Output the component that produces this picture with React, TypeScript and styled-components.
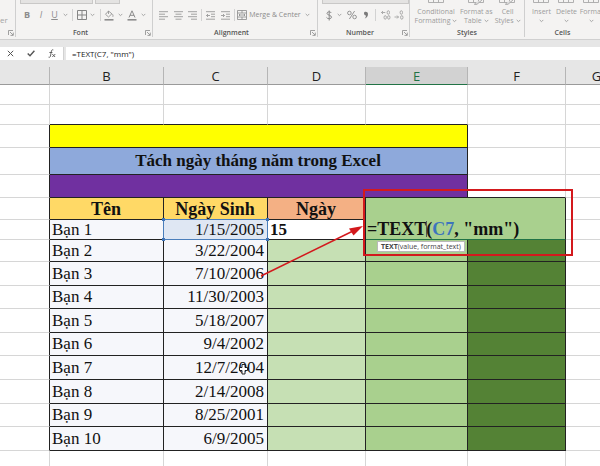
import React from "react";
import styled, { createGlobalStyle, css } from "styled-components";

const GlobalStyle = createGlobalStyle`
  *, *::before, *::after { box-sizing: border-box; }
  body { margin: 0; background: #fff; font-family: "Open Sans", "Noto Sans", sans-serif; }
`;

const ink = "#222";
const grid = "#d6d6d6";

const Page = styled.div`
  height: 100vh;
  overflow: hidden;
  display: flex;
  flex-direction: column;
`;

/* ---------- Ribbon ---------- */

const Ribbon = styled.header`
  flex: none;
  display: flex;
  height: 40px;
  overflow: hidden;
  background: #f4f3f2;
  border-bottom: 1px solid #d0d0d0;
`;

const Group = styled.section<{ $w?: number }>`
  flex: ${(p) => (p.$w ? `0 0 ${p.$w}px` : "1 0 0")};
  display: flex;
  flex-direction: column;
  min-width: 0;
  margin-bottom: 2px;
  border-right: 1px solid #cfcfcf;
  overflow: hidden;
  &:last-child { border-right: 0; }
`;

const Top = styled.div`
  flex: none;
  height: 7px;
  display: flex;
  align-items: flex-start;
  gap: 2px;
  padding-left: 4px;
`;

const Stub = styled.div<{ $w?: number }>`
  ${(p) => (p.$w ? `width: ${p.$w}px;` : "flex: 1;")}
  height: 4px;
  background: #e4e3e2;
  border: 1px solid #c9c8c7;
  border-top: 0;
`;

const Tools = styled.div<{ $pad: number }>`
  flex: none;
  display: flex;
  align-items: center;
  height: 16px;
  padding-left: ${(p) => p.$pad}px;
`;

const Tool = styled.button<{ $w: number; $label?: boolean }>`
  flex: 0 0 ${(p) => p.$w}px;
  display: flex;
  align-items: center;
  justify-content: center;
  height: 14px;
  padding: 0;
  border: 0;
  background: none;
  color: #8c8c8c;
  font: ${(p) => (p.$label ? 7 : 9)}px/14px "Open Sans", sans-serif;
  white-space: nowrap;
`;

const Rule = styled.span<{ $w: number }>`
  flex: 0 0 ${(p) => p.$w}px;
  height: 12px;
  background: linear-gradient(#d2d2d2, #d2d2d2) center / 1px 100% no-repeat;
`;

const BigTools = styled.div<{ $pad: number }>`
  flex: none;
  display: flex;
  padding-left: ${(p) => p.$pad}px;
  height: 27px;
`;

const BigTool = styled.button<{ $w: number }>`
  flex: 0 0 ${(p) => p.$w}px;
  display: flex;
  flex-direction: column;
  align-items: center;
  padding: 0;
  border: 0;
  background: none;
  color: #9c9c9c;
  font: 7px/9px "Open Sans", sans-serif;
  white-space: nowrap;
  svg { display: block; }
`;

const Line = styled.span`
  display: flex;
  align-items: center;
  gap: 2px;
  height: 9px;
`;

const Caption = styled.footer`
  margin-top: auto;
  flex: none;
  display: flex;
  align-items: center;
  height: 9px;
  font-size: 7px;
  line-height: 9px;
  font-weight: 600;
  color: #555;
`;

const CaptionText = styled.span`
  flex: 1;
  text-align: center;
`;

const Launcher = styled.button`
  flex: none;
  display: flex;
  padding: 0 1px 0 0;
  border: 0;
  background: none;
  color: #8a8a8a;
`;

const Clipped = styled.div`
  height: 14px;
  margin-top: 7px;
  color: #a3a3a3;
  font-size: 8px;
  line-height: 12px;
`;

const Chevron = () => (
  <svg width="5" height="4" viewBox="0 0 5 4" fill="none" stroke="#a5a5a5">
    <path d="M.7.9 2.5 2.7 4.3.9" />
  </svg>
);

const Launch = () => (
  <Launcher aria-label="More options">
    <svg width="6" height="6" viewBox="0 0 6 6" fill="none" stroke="currentColor" strokeWidth=".8">
      <path d="M.5 5V.5H5M2 2l3 3M5.3 2.6v2.8H2.5" />
    </svg>
  </Launcher>
);

const AlignIcon = ({ kind }: { kind: "left" | "center" | "right" }) => {
  const x = { left: 0, center: 1.5, right: 3 }[kind];
  return (
    <svg width="9" height="9" viewBox="0 0 9 9" stroke="#999" strokeWidth=".9">
      <path d={`M0 .7h9M${x} 3.2h6M0 5.7h9M${x} 8.2h6`} />
    </svg>
  );
};

const IndentIcon = ({ out }: { out?: boolean }) => (
  <svg width="9" height="9" viewBox="0 0 9 9" stroke="#999" strokeWidth=".9" fill="none">
    <path d="M0 .7h9M5 3.2h4M5 5.7h4M0 8.2h9" />
    <path d={out ? "M4 4.5H.5M2 3 .5 4.5 2 6" : "M0 4.5h3.5M2 3l1.5 1.5L2 6"} />
  </svg>
);

const BordersIcon = () => (
  <svg width="10" height="10" viewBox="0 0 10 10" stroke="#858585" fill="none">
    <path d="M.5.5h9v9h-9zM5 .5v9M.5 5h9" />
  </svg>
);

const FillIcon = () => (
  <svg width="11" height="11" viewBox="0 0 11 11" fill="none" stroke="#8a8a8a" strokeWidth=".8">
    <path d="M4.5 1 1.5 4.3l3 2.7 3.4-3.2zM4.5 1v3M8 3.8c1 .8 1.3 2 .8 3" />
    <path d="M.5 9h9v1.6h-9z" fill="#8d8d8d" stroke="none" />
  </svg>
);

const FontColorIcon = () => (
  <svg width="10" height="11" viewBox="0 0 10 11" fill="none" stroke="#8a8a8a">
    <path d="M2 7.5 5 .8l3 6.7M3 5.3h4" />
    <path d="M.5 9h9v1.6h-9z" fill="#8d8d8d" stroke="none" />
  </svg>
);

const MergeIcon = () => (
  <svg width="10" height="10" viewBox="0 0 10 10" fill="none" stroke="#8a8a8a" strokeWidth=".8">
    <path d="M.5.5h9v9h-9zM.5 3h9M.5 7h9M5 .5V3M5 7v2.5M2 5h6M3 4 2 5l1 1M7 4l1 1-1 1" />
  </svg>
);

const DecimalIcon = ({ less }: { less?: boolean }) => (
  <svg width="10" height="10" viewBox="0 0 10 10" fill="none" stroke="#999" strokeWidth=".8">
    <path d={less ? "M.5 7h4M3 5.5 4.5 7 3 8.5" : "M.5 2.5h3.8M2 1 .5 2.5 2 4"} />
    <ellipse cx="7.3" cy="2.5" rx="1.2" ry="1.8" />
    <ellipse cx="7.8" cy="7.4" rx="1.2" ry="1.8" />
    {!less && <ellipse cx="4.2" cy="7.4" rx="1.2" ry="1.8" />}
  </svg>
);

const SheetStub = ({ brush }: { brush?: boolean }) => (
  <svg width="17" height="7" viewBox="0 0 17 7" fill="none" stroke="#a8a8a8" strokeWidth=".9">
    <path d="M.5 0v2.5h15V0M5.5 0v2.5M10.5 0v2.5" />
    {brush && <path d="M14 0 9 4.3 6.5 4.5 8 2" fill="#ddd" />}
  </svg>
);

const styleTools = [
  { w: 48, a: "Conditional", b: "Formatting", brush: false },
  { w: 32, a: "Format as", b: "Table", brush: true },
  { w: 30, a: "Cell", b: "Styles", brush: true },
];
const cellTools = ["Insert", "Delete", "Format"];

/* ---------- Formula bar ---------- */

const FormulaBar = styled.div`
  flex: none;
  display: flex;
  gap: 2px;
  padding: 7px 0;
  background: #e6e6e6;
`;

const BarButtons = styled.div`
  flex: 0 0 64px;
  display: flex;
  align-items: center;
  height: 13px;
  background: #fff;
  border-right: 1px solid #d2d2d2;
`;

const BarButton = styled.button<{ $w: number }>`
  flex: 0 0 ${(p) => p.$w}px;
  display: flex;
  justify-content: center;
  padding: 0;
  border: 0;
  background: none;
`;

const FormulaInput = styled.input`
  flex: 1;
  min-width: 0;
  height: 13px;
  padding: 0 6px;
  border: 0;
  outline: 0;
  background: #fff;
  color: #222;
  font: 8px/13px "Open Sans", sans-serif;
`;

/* ---------- Sheet ---------- */

const Sheet = styled.table`
  flex: none;
  width: 100%;
  min-width: 628px;
  table-layout: fixed;
  border-collapse: separate;
  border-spacing: 0;
  font: 17px/18px "Liberation Serif", serif;
  color: #111;
`;

const Col = styled.col<{ $w?: number }>`
  ${(p) => p.$w && `width: ${p.$w}px;`}
`;

const Row = styled.tr<{ $h: number }>`
  height: ${(p) => p.$h}px;
`;

const ColumnHead = styled.th<{ $active?: boolean }>`
  padding: 0;
  border-right: 1px solid #b5b5b5;
  border-bottom: 1px solid #9a9a9a;
  background: #e6e6e6;
  color: #222;
  font: 13px/16px "Open Sans", sans-serif;
  overflow: hidden;
  ${(p) => p.$active && css`
    background: #d2d2d2;
    color: #217346;
    border-bottom-color: #217346;
  `}
`;

const Cell = styled.td<{ $bg?: string; $dark?: boolean; $side?: boolean; $under?: boolean; $align?: string; $bold?: boolean }>`
  position: relative;
  padding: 0 3px 0 2px;
  white-space: nowrap;
  vertical-align: middle;
  text-align: ${(p) => p.$align || "left"};
  font-weight: ${(p) => (p.$bold ? 700 : 400)};
  background: ${(p) => p.$bg || "#fff"};
  border-right: 1px solid ${(p) => (p.$dark || p.$side ? ink : grid)};
  border-bottom: 1px solid ${(p) => (p.$dark || p.$under ? ink : grid)};
`;

const TitleCell = styled(Cell)`
  font-weight: 700;
  text-align: center;
`;

const HeadCell = styled(TitleCell)`
  font-size: 18px;
`;

const EditCell = styled(Cell)`
  vertical-align: bottom;
  font-size: 18px;
  font-weight: 700;
  padding: 0 0 1px 1px;
  border-bottom-color: #217346;
`;

const CellRef = styled.span`
  color: #3c74bd;
`;

const Caret = styled.span`
  display: inline-block;
  width: 1px;
  height: 16px;
  margin-right: -1px;
  vertical-align: -2px;
  background: #555;
`;

const Picked = styled.div`
  position: absolute;
  z-index: 2;
  inset: -1px;
  border: 1px solid #4a7ebb;
`;

const Handle = styled.i<{ $at: string }>`
  position: absolute;
  width: 3px;
  height: 3px;
  background: #3f73b5;
  ${(p) => (p.$at.includes("t") ? "top: -2px;" : "bottom: -2px;")}
  ${(p) => (p.$at.includes("l") ? "left: -2px;" : "right: -2px;")}
`;

const RedFrame = styled.div`
  position: absolute;
  z-index: 3;
  inset: -9px -8px -17px -3px;
  border: 2px solid #d3191d;
`;

const Arrow = styled.svg`
  position: absolute;
  z-index: 4;
  left: -108px;
  top: 24px;
`;

const Hint = styled.div`
  position: absolute;
  z-index: 4;
  left: 11px;
  top: 43px;
  padding: 0 3px;
  border: 1px solid #b9b9b9;
  background: #fff;
  color: #444;
  font: 7px/9px "Open Sans", sans-serif;
`;

const Pointer = styled.svg`
  position: absolute;
  right: 19px;
  top: 8px;
`;

const people = [
  { name: "Bạn 1", date: "1/15/2005", h: 20 },
  { name: "Bạn 2", date: "3/22/2004", h: 22 },
  { name: "Bạn 3", date: "7/10/2006", h: 24 },
  { name: "Bạn 4", date: "11/30/2003", h: 23 },
  { name: "Bạn 5", date: "5/18/2007", h: 24 },
  { name: "Bạn 6", date: "9/4/2002", h: 23 },
  { name: "Bạn 7", date: "12/7/2004", h: 24 },
  { name: "Bạn 8", date: "2/14/2008", h: 24 },
  { name: "Bạn 9", date: "8/25/2001", h: 23 },
  { name: "Bạn 10", date: "6/9/2005", h: 24 },
];

const bands = [
  { h: 23, bg: "#ffff00", text: "" },
  { h: 27, bg: "#8ea9db", text: "Tách ngày tháng năm trong Excel" },
  { h: 23, bg: "#7030a0", text: "" },
];

const columns = ["A", "B", "C", "D", "E", "F", "G"];

export default function App() {
  return (
    <Page>
      <GlobalStyle />
      <Ribbon>
        <Group $w={16}>
          <Top />
          <Clipped>er</Clipped>
          <Caption><CaptionText /><Launch /></Caption>
        </Group>
        <Group $w={137}>
          <Top><Stub $w={73} /><Stub $w={25} /></Top>
          <Tools $pad={4}>
            <Tool $w={14} aria-label="Bold"><b>B</b></Tool>
            <Tool $w={14} aria-label="Italic"><i>I</i></Tool>
            <Tool $w={13} aria-label="Underline"><u>U</u></Tool>
            <Tool $w={8} aria-label="Underline styles"><Chevron /></Tool>
            <Rule $w={7} />
            <Tool $w={11} aria-label="Borders"><BordersIcon /></Tool>
            <Tool $w={10} aria-label="Border styles"><Chevron /></Tool>
            <Rule $w={7} />
            <Tool $w={11} aria-label="Fill colour"><FillIcon /></Tool>
            <Tool $w={10} aria-label="Fill colours"><Chevron /></Tool>
            <Tool $w={14} aria-label="Font colour"><FontColorIcon /></Tool>
            <Tool $w={8} aria-label="Font colours"><Chevron /></Tool>
          </Tools>
          <Caption><CaptionText>Font</CaptionText><Launch /></Caption>
        </Group>
        <Group $w={165}>
          <Top />
          <Tools $pad={3}>
            <Tool $w={15} aria-label="Align left"><AlignIcon kind="left" /></Tool>
            <Tool $w={14} aria-label="Centre"><AlignIcon kind="center" /></Tool>
            <Tool $w={14} aria-label="Align right"><AlignIcon kind="right" /></Tool>
            <Rule $w={4} />
            <Tool $w={15} aria-label="Decrease indent"><IndentIcon out /></Tool>
            <Tool $w={14} aria-label="Increase indent"><IndentIcon /></Tool>
            <Rule $w={4} />
            <Tool $w={12} aria-label="Merge"><MergeIcon /></Tool>
            <Tool $w={54} $label>Merge &amp; Center</Tool>
            <Tool $w={10} aria-label="Merge options"><Chevron /></Tool>
          </Tools>
          <Caption><CaptionText>Alignment</CaptionText><Launch /></Caption>
        </Group>
        <Group $w={92}>
          <Top><Stub /></Top>
          <Tools $pad={4}>
            <Tool $w={13} aria-label="Currency">
              <svg width="8" height="11" viewBox="0 0 8 11" fill="none" stroke="#8a8a8a">
                <path d="M6.3 3C5.8 1.4 2 1.3 2 3.4c0 2 4.5 1.5 4.5 3.8 0 2-4.2 2-5 .2M4.2.5v10" />
              </svg>
            </Tool>
            <Tool $w={9} aria-label="Currency formats"><Chevron /></Tool>
            <Tool $w={16} aria-label="Percent">
              <svg width="10" height="10" viewBox="0 0 10 10" fill="none" stroke="#8a8a8a" strokeWidth=".9">
                <circle cx="2.4" cy="3" r="1.8" /><circle cx="7.6" cy="7" r="1.8" /><path d="M7.6 1 2.4 9" />
              </svg>
            </Tool>
            <Tool $w={12} aria-label="Comma">
              <svg width="6" height="8" viewBox="0 0 6 8" fill="#7a7a7a">
                <path d="M1 2.2C1 .3 5 .2 5 3 5 5.6 3.5 7 1.5 7.6 2.6 6.5 3 5.5 3 4.4 1.8 4.6 1 3.5 1 2.2z" />
              </svg>
            </Tool>
            <Rule $w={7} />
            <Tool $w={13} aria-label="Increase decimal"><DecimalIcon /></Tool>
            <Tool $w={14} aria-label="Decrease decimal"><DecimalIcon less /></Tool>
          </Tools>
          <Caption><CaptionText>Number</CaptionText><Launch /></Caption>
        </Group>
        <Group $w={115}>
          <BigTools $pad={2}>
            {styleTools.map((t) => (
              <BigTool key={t.a} $w={t.w}>
                <SheetStub brush={t.brush} />
                <Line>{t.a}</Line>
                <Line>{t.b}<Chevron /></Line>
              </BigTool>
            ))}
          </BigTools>
          <Caption><CaptionText>Styles</CaptionText></Caption>
        </Group>
        <Group>
          <BigTools $pad={4}>
            {cellTools.map((t) => (
              <BigTool key={t} $w={25}>
                <SheetStub />
                <Line>{t}</Line>
                <Line><Chevron /></Line>
              </BigTool>
            ))}
          </BigTools>
          <Caption><CaptionText>Cells</CaptionText></Caption>
        </Group>
      </Ribbon>

      <FormulaBar>
        <BarButtons>
          <BarButton $w={20} aria-label="Cancel">
            <svg width="7" height="7" viewBox="0 0 7 7" stroke="#555" fill="none"><path d="m.8.8 5.4 5.4M6.2.8.8 6.2" /></svg>
          </BarButton>
          <BarButton $w={22} aria-label="Enter">
            <svg width="8" height="7" viewBox="0 0 8 7" stroke="#555" strokeWidth="1.4" fill="none"><path d="m.7 3.5 2.3 2.3L7.4.8" /></svg>
          </BarButton>
          <BarButton $w={20} aria-label="Insert function">
            <svg width="8" height="9" viewBox="0 0 8 9" stroke="#555" fill="none">
              <path d="M5.3.9C3.9.4 3.5 1.3 3.2 3L2.500 7C2.200 8.300 1.500 8.500.6 8.200M1.400 3.500h3M4.300 5l2.800 3M7.300 5 4.300 8" strokeWidth=".9" />
            </svg>
          </BarButton>
        </BarButtons>
        <FormulaInput aria-label="Formula" defaultValue={'=TEXT(C7, "mm")'} />
      </FormulaBar>

      <Sheet>
        <colgroup>
          <Col $w={50} /><Col $w={114} /><Col $w={104} /><Col $w={98} /><Col $w={102} /><Col $w={98} /><Col />
        </colgroup>
        <thead>
          <Row $h={18}>
            {columns.map((c) => (
              <ColumnHead key={c} scope="col" $active={c === "E"}>{c === "A" ? "" : c}</ColumnHead>
            ))}
          </Row>
        </thead>
        <tbody>
          <Row $h={20}>{columns.map((c) => <Cell key={c} />)}</Row>
          <Row $h={20}>{columns.map((c) => <Cell key={c} $under={"BCDE".includes(c)} />)}</Row>
          {bands.map((b) => (
            <Row key={b.bg} $h={b.h}>
              <Cell $side />
              <TitleCell colSpan={4} $dark $bg={b.bg}>{b.text}</TitleCell>
              <Cell $under={b.bg === "#7030a0"} />
              <Cell />
            </Row>
          ))}
          <Row $h={22}>
            <Cell $side />
            <HeadCell $dark $bg="#ffd966">Tên</HeadCell>
            <HeadCell $dark $bg="#ffd966">Ngày Sinh</HeadCell>
            <HeadCell $dark $bg="#f4b084">Ngày</HeadCell>
            <EditCell colSpan={2} rowSpan={2} $dark $bg="#a9d08e">
              =TEXT<Caret />(<CellRef>C7</CellRef>, "mm")
              <RedFrame />
              <Hint><b>TEXT</b>(value, format_text)</Hint>
              <Arrow width="108" height="56" viewBox="0 0 108 56">
                <path d="M3 54 95 9" stroke="#d3191d" strokeWidth="1.5" />
                <path d="M105 4 91 6.5l4.5 7z" fill="#d3191d" />
              </Arrow>
            </EditCell>
            <Cell />
          </Row>
          {people.map((p, i) => (
            <Row key={p.name} $h={p.h}>
              <Cell $side />
              <Cell $dark $bg="#f6f7fb">{p.name}</Cell>
              <Cell $dark $bg={i === 0 ? "#dfe7f3" : "#f6f7fb"} $align="right">
                {p.date}
                {i === 0 && (
                  <Picked>
                    <Handle $at="tl" /><Handle $at="tr" /><Handle $at="bl" /><Handle $at="br" />
                  </Picked>
                )}
                {i === 6 && (
                  <Pointer width="9" height="11" viewBox="0 0 9 11" fill="#fff" stroke="#111" strokeWidth=".9">
                    <path d="M3 .5h3v3h2.5v3H6v3.5H3V6.500H.5v-3H3z" />
                  </Pointer>
                )}
              </Cell>
              <Cell $dark $bold $bg={i === 0 ? "#fff" : "#c6e0b4"}>{i === 0 ? "15" : ""}</Cell>
              {i > 0 && <Cell $dark $bg="#a9d08e" />}
              {i > 0 && <Cell $dark $bg="#548235" />}
              <Cell />
            </Row>
          ))}
          <Row $h={23}>{columns.map((c) => <Cell key={c} />)}</Row>
        </tbody>
      </Sheet>
    </Page>
  );
}
